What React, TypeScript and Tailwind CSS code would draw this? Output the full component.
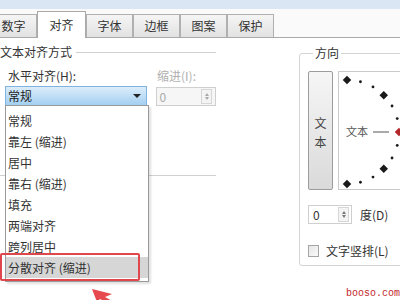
const tabs = ["数字", "对齐", "字体", "边框", "图案", "保护"];

const options = [
  "常规",
  "靠左 (缩进)",
  "居中",
  "靠右 (缩进)",
  "填充",
  "两端对齐",
  "跨列居中",
  "分散对齐 (缩进)",
];

function Dial() {
  const cx = 8;
  const cy = 60;
  const r = 52;
  const points = Array.from({ length: 13 }, (_, i) => {
    const a = ((-90 + i * 15) * Math.PI) / 180;
    return { x: cx + r * Math.cos(a), y: cy + r * Math.sin(a), big: i % 3 === 0, red: i === 6 };
  });
  return (
    <svg className="absolute left-0 top-0" width="80" height="119">
      {points.map((p, i) =>
        p.big ? (
          <rect
            key={i}
            x={p.x - 3}
            y={p.y - 3}
            width="6"
            height="6"
            transform={`rotate(45 ${p.x} ${p.y})`}
            fill={p.red ? "#b3262a" : "#1a1a1a"}
          />
        ) : (
          <circle key={i} cx={p.x} cy={p.y} r="1.4" fill="#1a1a1a" />
        )
      )}
      <line x1="34" y1="60" x2="50" y2="60" stroke="#555" strokeWidth="1" />
    </svg>
  );
}

function Spin({ dim }: { dim?: boolean }) {
  const c = dim ? "border-b-[#aaa]" : "border-b-[#777]";
  const d = dim ? "border-t-[#aaa]" : "border-t-[#777]";
  return (
    <div className="flex h-[15px] w-[11px] flex-col items-center justify-around border border-[#d6d6d6] bg-[#f4f4f4] py-[2px]">
      <span className={"h-0 w-0 border-x-[2.5px] border-b-[3px] border-x-transparent " + c} />
      <span className={"h-0 w-0 border-x-[2.5px] border-t-[3px] border-x-transparent " + d} />
    </div>
  );
}

export default function App() {
  return (
    <div className="relative h-[300px] w-[400px] overflow-hidden bg-white font-['Noto_Sans_CJK_SC',sans-serif] text-[12px] leading-[16px] text-[#333]">
      <div className="h-[9px] bg-[#dae6f3]" />

      {/* tabs */}
      <div className="flex h-[29px] items-end border-b border-[#a9a9a9] bg-[#fafafa]">
        {tabs.map((t, i) =>
          i === 1 ? (
            <div
              key={t}
              className="-mb-px flex h-[27px] w-[49px] items-center justify-center border border-b-0 border-[#a9a9a9] bg-white"
            >
              {t}
            </div>
          ) : (
            <div
              key={t}
              className={
                "flex h-[23px] items-center justify-center border border-b-0 border-[#b0b0b0] bg-gradient-to-b from-[#f5f5f5] to-[#e2e2e2] " +
                (i === 0 ? "-ml-[10px] w-[47px]" : "w-[47px]")
              }
            >
              {t}
            </div>
          )
        )}
      </div>

      <div className="flex">
        {/* left column */}
        <div className="w-[216px]">
          <div className="mt-[6px] flex items-center">
            <span className="whitespace-nowrap">文本对齐方式</span>
            <div className="ml-[4px] flex-1 border-t border-[#d0d0d0]" />
          </div>
          <div className="mt-[8px] flex">
            <span className="ml-[8px] w-[149px]">水平对齐(H):</span>
            <span className="text-[#b0b0b0]">缩进(I):</span>
          </div>
          <div className="mt-[2px] flex items-start">
            <div className="ml-[5px] flex h-[20px] w-[143px] items-center justify-between border border-[#7fb3e2] bg-gradient-to-b from-[#dcedfb] to-[#a3cff1] pl-[2px] pr-[5px] text-[#222]">
              <span>常规</span>
              <span className="h-0 w-0 border-x-[4px] border-t-[4px] border-x-transparent border-t-[#222]" />
            </div>
            <div className="ml-[9px] mt-px flex h-[19px] w-[61px] items-center justify-between border border-[#cfcfcf] bg-[#f6f6f6] pl-[3px] pr-[3px] text-[#aaa]">
              <span>0</span>
              <Spin dim />
            </div>
          </div>
          <div className="mt-[69px] border-t border-[#d0d0d0]" />
        </div>

        {/* right column */}
        <fieldset className="ml-[83px] mt-[7px] w-[120px] shrink-0 rounded-[3px] border border-[#d4d4d4] pb-[6px] pl-[8px] pt-[10px]">
          <legend className="ml-[5px] px-[2px]">方向</legend>
          <div className="flex">
            <div className="flex h-[119px] w-[25px] flex-col items-center justify-center rounded-[2px] border border-[#9c9c9c] bg-gradient-to-b from-[#f6f6f6] to-[#dadada] pt-[3px] leading-[19px] text-[#444]">
              <span>文</span>
              <span>本</span>
            </div>
            <div className="relative ml-[5px] h-[119px] flex-1 border border-[#cacaca] bg-white">
              <Dial />
              <span className="absolute left-[7px] top-[51px] text-[11px] text-[#555]">文本</span>
            </div>
          </div>
          <div className="mt-[15px] flex items-center">
            <div className="flex h-[19px] w-[44px] items-center justify-between border border-[#cfcfcf] bg-white pl-[4px] pr-[2px]">
              <span>0</span>
              <Spin />
            </div>
            <span className="ml-[8px]">度(D)</span>
          </div>
          <div className="mt-[19px] flex items-center">
            <div className="h-[12px] w-[11px] border border-[#a5a5a5] bg-gradient-to-br from-[#e6e6e6] to-[#fafafa]" />
            <span className="ml-[7px]">文字竖排(L)</span>
          </div>
        </fieldset>
      </div>

      {/* open dropdown list */}
      <div className="absolute left-[5px] top-[105px] w-[144px] border border-[#9a9a9a] bg-white pb-[3px] pt-[4px] shadow-[2px_2px_2px_rgba(0,0,0,0.12)]">
        {options.map((o, i) => (
          <div
            key={o}
            className={
              "flex h-[21px] items-center pl-[2px] " + (i === options.length - 1 ? "bg-[#d6d6d6]" : "")
            }
          >
            {o}
          </div>
        ))}
      </div>
      <div className="absolute left-0 top-[253px] h-[28px] w-[140px] rounded-[2px] border-2 border-[#e0474c]" />

      {/* red arrow */}
      <svg className="absolute left-[88px] top-[286px]" width="30" height="14">
        <polygon points="4,3 24,8 17,11 26,16 18,16 12,13 9,16" fill="#e64a4f" />
      </svg>

      <span className="absolute left-[346px] top-[287px] font-['Liberation_Mono',monospace] text-[10px] leading-[14px] text-[#c4262c]">
        booso.com
      </span>
    </div>
  );
}
